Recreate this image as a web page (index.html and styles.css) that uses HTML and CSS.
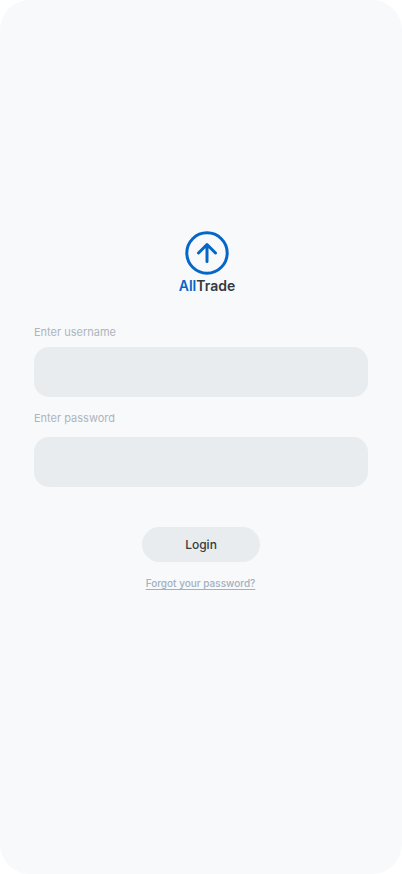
FILE: index.html
```html
<!DOCTYPE html>
<html lang="en">
<head>
<meta charset="utf-8">
<title>AllTrade</title>
<link rel="stylesheet" href="styles.css">
</head>
<body>
<main class="screen">
  <header class="brand">
    <svg class="brand-icon" viewBox="0 0 44 44" fill="none" stroke="currentColor" stroke-width="3" stroke-linecap="round" stroke-linejoin="round" aria-hidden="true">
      <circle cx="22" cy="22" r="20.2"/>
      <path d="M22 30.5V14M13.5 22L22 13.5L30.5 22"/>
    </svg>
    <h1 class="brand-name"><span class="accent">All</span>Trade</h1>
  </header>
  <form class="form">
    <label class="label" for="user">Enter username</label>
    <input class="field" id="user" type="text">
    <label class="label label-password" for="pass">Enter password</label>
    <input class="field" id="pass" type="password">
    <button class="login" type="button">Login</button>
    <a class="forgot" href="#">Forgot your password?</a>
  </form>
</main>
</body>
</html>
```
FILE: styles.css
```css
* { box-sizing: border-box; }
body { margin: 0; background: #fff; font-family: Inter, sans-serif; }
.screen { height: 874px; padding: 231px 34px 0; background: #f8f9fb; border-radius: 30px; }
.brand { display: flex; flex-direction: column; align-items: center; padding-left: 12px; color: #0466c8; }
.brand-icon { width: 44px; height: 44px; }
.brand-name { margin: 2px 0 0; font-size: 14px; line-height: 18px; font-weight: 600; color: #343a40; }
.accent { color: #0466c8; }
.form { display: flex; flex-direction: column; margin-top: 30px; }
.label { height: 22px; font-size: 11px; line-height: 15px; font-weight: 400; color: #adb5bd; }
.label-password { height: 26px; margin-top: 14px; }
.field { width: 100%; height: 50px; padding: 0 16px; border: 0; border-radius: 15px; background: #e8ecee; font: 14px Inter, sans-serif; }
.login { align-self: center; width: 118px; height: 35px; margin-top: 40px; padding: 0; border: 0; border-radius: 18px; background: #e8ecee; color: #343a40; font: 500 12px Inter, sans-serif; }
.forgot { align-self: center; margin-top: 15px; padding-right: 1px; font-size: 10px; line-height: 13px; font-weight: 500; color: #a3b1bf; text-decoration-thickness: 1px; text-underline-offset: 2px; }
```
